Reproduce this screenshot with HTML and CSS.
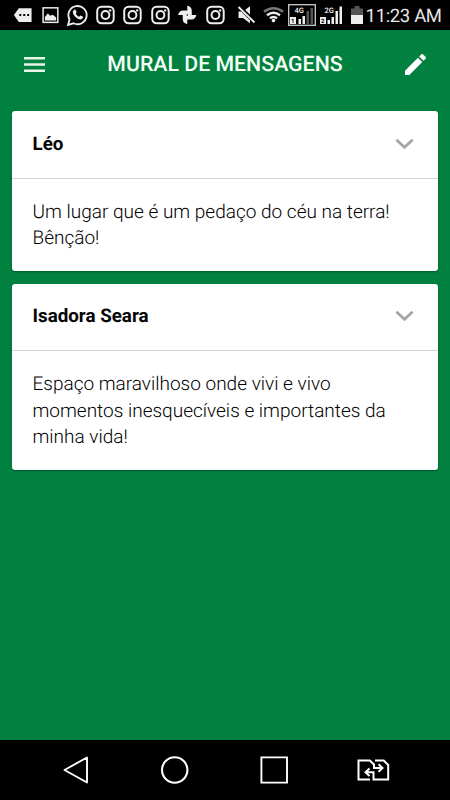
FILE: index.html
```html
<!DOCTYPE html>
<html lang="pt-BR">
<head>
<meta charset="utf-8">
<title>Mural de Mensagens</title>
<link rel="stylesheet" href="styles.css">
</head>
<body>
<svg class="defs" aria-hidden="true">
  <symbol id="camera" viewBox="0 0 28 30">
    <rect x="5.300" y="6.600" width="16.800" height="16.800" rx="4.500" fill="none" stroke="#eee" stroke-width="2"/>
    <circle cx="13.700" cy="15" r="4" fill="none" stroke="#eee" stroke-width="2"/>
    <circle cx="18.500" cy="10.300" r="1.200" fill="#eee"/>
  </symbol>
  <symbol id="chevron" viewBox="0 0 20 12">
    <path d="M1.500 1.500 10 9.500 18.500 1.500" fill="none" stroke="#a6a6a6" stroke-width="2.900"/>
  </symbol>
</svg>
<div class="screen">
  <div class="status">
    <div class="notices">
      <svg viewBox="0 0 28 30"><path d="M10 8h13v14H10L5 15z" fill="#eee"/><path d="M10.500 14h2v2h-2zm4 0h2v2h-2zm4 0h2v2h-2z" fill="#000"/></svg>
      <svg viewBox="0 0 28 30"><rect x="6.200" y="7.700" width="15" height="14.800" fill="none" stroke="#eee" stroke-width="1.500"/><path d="M8 20.500V17l3-3.500 2.500 2.200 2.500-1 3.500 2.800v3z" fill="#eee"/></svg>
      <svg viewBox="0 0 28 30"><path d="M4.200 25 5.600 19.500A9.300 9.300 0 1 1 9.600 23.400Z" fill="none" stroke="#eee" stroke-width="1.900"/><path d="M10.200 9.800c.9-.6 1.600-.3 1.900.5l.7 1.700c.2.600-.9 1.300-.7 1.700.8 1.500 1.700 2.300 3.200 3 .5.200 1.100-1.400 1.700-1.200l2 1c.8.400.1 2-.8 2.600-1.400.9-3.600.1-5.600-1.300-2-1.500-3.600-3.700-3.600-5.500 0-1 .5-2 1.200-2.500z" fill="#eee"/></svg>
      <svg><use href="#camera"/></svg>
      <svg><use href="#camera"/></svg>
      <svg><use href="#camera"/></svg>
      <svg viewBox="0 0 28 30"><path d="M13.500 15V5.700a4.700 4.700 0 0 1 4.600 5.300V15zM13.500 15h9.200a4.700 4.700 0 0 1-5 4.500h-4.200zM13.500 15v9.200a4.700 4.700 0 0 1-4.600-5V15zM13.500 15H4.300a4.700 4.700 0 0 1 5-4.500h4.200z" fill="#eee"/><circle cx="13.500" cy="15" r=".8"/></svg>
      <svg><use href="#camera"/></svg>
    </div>
    <svg class="mute" viewBox="0 0 20 30"><path d="M1.500 11.500H6l7-5.200v17l-7-5.300H1.500z" fill="#eee"/><path d="M1 5.500 18 22.500" stroke="#000" stroke-width="4"/><path d="M1.500 7 17.500 22.500" stroke="#eee" stroke-width="1.800"/></svg>
    <svg class="wifi" viewBox="0 0 22 30" fill="none"><path d="M1 11.800q9.500-7 19 0" stroke="#777" stroke-width="2.400"/><path d="M4 15.200q6.500-5 13 0M7 18.300q3.500-2.700 7 0" stroke="#eee" stroke-width="2.400"/><circle cx="10.500" cy="20.600" r="1.800" fill="#eee"/></svg>
    <svg class="signal" viewBox="0 0 28 30"><rect x=".7" y="4.700" width="26.600" height="20.600" fill="none" stroke="#ccc" stroke-width="1.300"/><path d="M10.500 19h2.500v5h-2.500zM14.500 16H17v8h-2.500z" fill="#eee"/><path d="M18.500 11H21v13h-2.500zM22.500 8H25v16h-2.500z" fill="#555"/><text x="6.500" y="13" class="net">4G</text><rect x="2" y="17" width="6" height="7" fill="#eee"/><text x="3" y="22.500" class="sim">1</text></svg>
    <svg class="signal second" viewBox="0 0 26 30"><path d="M8.500 20H11v4H8.500zM12.500 17H15v7h-2.500zM16.500 11H19v13h-2.500zM20.500 6.500H23V24h-2.500z" fill="#eee"/><text x="5.500" y="13" class="net">2G</text><rect x="1" y="17" width="6" height="7" fill="#eee"/><text x="2" y="22.500" class="sim">2</text></svg>
    <svg class="battery" viewBox="0 0 12 30"><path d="M3.500 6h5v2.500H12V15H0V8.500h3.500z" fill="#555"/><path d="M0 15h12v9H0z" fill="#eee"/></svg>
    <time class="clock">11:23 AM</time>
  </div>
  <header class="appbar">
    <svg class="menu" viewBox="0 0 21 15"><path d="M0 1.300h21M0 7.500h21M0 13.700h21" stroke="#e9f5e8" stroke-width="2.600"/></svg>
    <h1>MURAL DE MENSAGENS</h1>
    <svg class="edit" viewBox="3 3 18 18"><path d="M3 17.250V21h3.750L17.810 9.940l-3.750-3.750L3 17.250zM20.710 7.040a1 1 0 0 0 0-1.410l-2.340-2.340a1 1 0 0 0-1.410 0l-1.830 1.830 3.750 3.750 1.830-1.830z" fill="#fff"/></svg>
  </header>
  <main>
    <article class="card">
      <div class="author"><h2>Léo</h2><svg><use href="#chevron"/></svg></div>
      <p>Um lugar que é um pedaço do céu na terra!<br>Bênção!</p>
    </article>
    <article class="card">
      <div class="author"><h2>Isadora Seara</h2><svg><use href="#chevron"/></svg></div>
      <p>Espaço maravilhoso onde vivi e vivo<br>momentos inesquecíveis e importantes da<br>minha vida!</p>
    </article>
  </main>
  <nav class="navbar">
    <svg viewBox="0 0 34 30" fill="none" stroke="#fff" stroke-width="1.900"><path d="M29 2.500v25L6.500 15z" stroke-linejoin="round"/></svg>
    <svg viewBox="0 0 34 30" fill="none" stroke="#fff" stroke-width="2.100"><circle cx="17.700" cy="15" r="12.700"/></svg>
    <svg viewBox="0 0 34 30" fill="none" stroke="#fff" stroke-width="1.900"><path d="M4.400 2.400h25.600v25.200H4.400z"/></svg>
    <svg viewBox="0 0 34 30" fill="none" stroke="#fff" stroke-width="2"><path d="M14 24.500H2.500v-19h11.300L18 9.500V13h8M22.500 9.200l4 3.800-4 3.800M19 5.500h8.700l4.500 4.500v14.500H17.500V17.300H9.700M13.500 13.500l-4 3.800 4 3.800"/></svg>
  </nav>
</div>
</body>
</html>
```
FILE: styles.css
```css
* { box-sizing: border-box; }
body { margin: 0; font-family: Roboto, sans-serif; background: #000; text-rendering: geometricPrecision; }
svg { display: block; flex: none; }
h1, h2, p { margin: 0; }
.defs { display: none; }
.screen { width: 450px; height: 800px; display: flex; flex-direction: column; background: #008140; }
.status { height: 30px; display: flex; background: #000; padding-left: 9px; color: #e6e6e6; }
.notices { display: flex; width: 220px; margin-right: 8px; }
.notices svg { width: 27.5px; height: 30px; }
.mute { width: 20px; height: 30px; margin-right: 6px; }
.wifi { width: 22px; height: 30px; margin-right: 3px; }
.signal { width: 28px; height: 30px; margin-right: 3px; }
.second { width: 26px; margin-right: 6px; }
.battery { width: 12px; height: 30px; margin-right: 2.6px; }
.net { font: bold 7.5px Roboto, sans-serif; fill: #ddd; }
.sim { font: bold 6px Roboto, sans-serif; fill: #000; }
.clock { font-size: 18.5px; letter-spacing: -.35px; line-height: 32px; white-space: nowrap; }
.appbar { height: 69px; display: flex; align-items: center; justify-content: space-between; padding: 0 24px; }
.menu { width: 21px; height: 15px; }
.appbar h1 { color: #f5fff5; font-size: 21.3px; font-weight: 500; line-height: 30px; white-space: nowrap; }
.edit { width: 21px; height: 21px; }
main { flex: 1; padding: 12px; display: flex; flex-direction: column; gap: 12.8px; }
.card { background: #fff; border-radius: 3px; box-shadow: 0 1px 2px rgba(0, 0, 0, .35); }
.author { height: 67.5px; padding: 0 24.5px 1.5px 20.5px; display: flex; align-items: center; justify-content: space-between; border-bottom: 1px solid #d3d3d3; }
.author h2 { font-size: 18.8px; line-height: 26px; font-weight: 700; color: #050505; }
.author svg { width: 19px; height: 12px; }
.card p { padding: 20px 20px 19.7px 20.5px; font-size: 19px; line-height: 26.3px; font-weight: 300; color: #000; white-space: nowrap; }
.card + .card { margin-top: .3px; }
.navbar { height: 60px; display: flex; align-items: center; gap: 65.3px; padding-left: 58px; background: #000; }
.navbar svg { width: 34px; height: 30px; }
```
